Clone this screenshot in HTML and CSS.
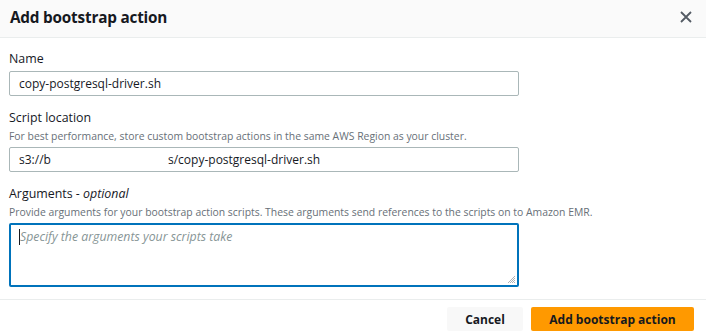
FILE: index.html
```html
<!DOCTYPE html>
<html>
<head>
<meta charset="utf-8">
<link rel="stylesheet" href="styles.css">
</head>
<body>
<div class="modal">
  <div class="header">
    <h2 class="title">Add bootstrap action</h2>
    <button class="close" aria-label="Close">
      <svg width="12" height="12" viewBox="0 0 12 12"><path d="M1 1 L11 11 M11 1 L1 11" stroke="#545b64" stroke-width="1.8" fill="none"/></svg>
    </button>
  </div>
  <div class="body">
    <div class="field">
      <label class="label">Name</label>
      <div class="input">copy-postgresql-driver.sh</div>
    </div>
    <div class="field">
      <label class="label">Script location</label>
      <div class="desc">For best performance, store custom bootstrap actions in the same AWS Region as your cluster.</div>
      <div class="input"><span class="seg1">s3://b</span><span>s/copy-postgresql-driver.sh</span></div>
    </div>
    <div class="field">
      <label class="label">Arguments - <i>optional</i></label>
      <div class="desc">Provide arguments for your bootstrap action scripts. These arguments send references to the scripts on to Amazon EMR.</div>
      <div class="textarea">
        <span class="caret"></span><span class="placeholder">Specify the arguments your scripts take</span>
        <svg class="grip" width="9" height="9" viewBox="0 0 9 9"><path d="M8 1 L1 8 M8 3 L3 8 M8 5 L5 8 M8 7 L7 8" stroke="#9aa0a6" stroke-width="0.8"/></svg>
      </div>
    </div>
  </div>
  <div class="footer">
    <button class="btn cancel">Cancel</button>
    <button class="btn primary">Add bootstrap action</button>
  </div>
</div>
</body>
</html>
```
FILE: styles.css
```css
* { box-sizing: border-box; }
html, body { margin: 0; padding: 0; background: #fff; }
body { font-family: "Open Sans", "Noto Sans", sans-serif; color: #16191f; width: 706px; height: 336px; overflow: hidden; position: relative; }
.header {
  height: 38px;
  background: #fafafa;
  border-bottom: 1px solid #eaeded;
  display: flex;
  align-items: center;
  justify-content: space-between;
  padding: 0 14px 3px 10px;
}
.title { margin: 0; font-size: 15.3px; font-weight: 700; letter-spacing: -0.2px; }
.close { border: 0; background: none; padding: 0; width: 12px; height: 12px; display: flex; }
.body { padding: 12px 9px 0 9px; }
.field { display: flex; flex-direction: column; align-items: flex-start; margin-bottom: 13px; }
.label { font-size: 12.4px; line-height: 18px; color: #16191f; margin-bottom: 3px; }
.desc { font-size: 10.4px; line-height: 14px; color: #687078; margin-top: -1px; margin-bottom: 4px; white-space: nowrap; }
.input {
  width: 510px; height: 25px;
  border: 1px solid #aab7b8; border-radius: 2px;
  font-size: 12px; line-height: 23px; padding: 0 9px;
  display: flex; white-space: nowrap;
}
.seg1 { width: 149px; }
.textarea {
  position: relative;
  width: 510px; height: 64px;
  border: 2px solid #0073bb; border-radius: 2px;
  padding: 3px 8px;
  font-size: 12.3px; line-height: 18px;
  display: flex; align-items: flex-start;
}
.caret { width: 1px; height: 16px; background: #16191f; margin-top: 1px; }
.placeholder { color: #879596; font-style: italic; }
.grip { position: absolute; right: 1px; bottom: 1px; }
.footer {
  position: absolute; left: 0; right: 0; top: 299px;
  border-top: 1px solid #eaeded;
  display: flex; justify-content: flex-end; gap: 8px;
  padding: 7px 12px 0 0;
}
.btn {
  height: 24px; border: 0; border-radius: 2px;
  font-family: inherit; font-size: 12px; font-weight: 700; color: #16191f;
  padding: 0; white-space: nowrap; cursor: pointer;
}
.cancel { background: #f8f8f8; width: 76px; }
.primary { background: #ff9900; width: 163px; }
```
